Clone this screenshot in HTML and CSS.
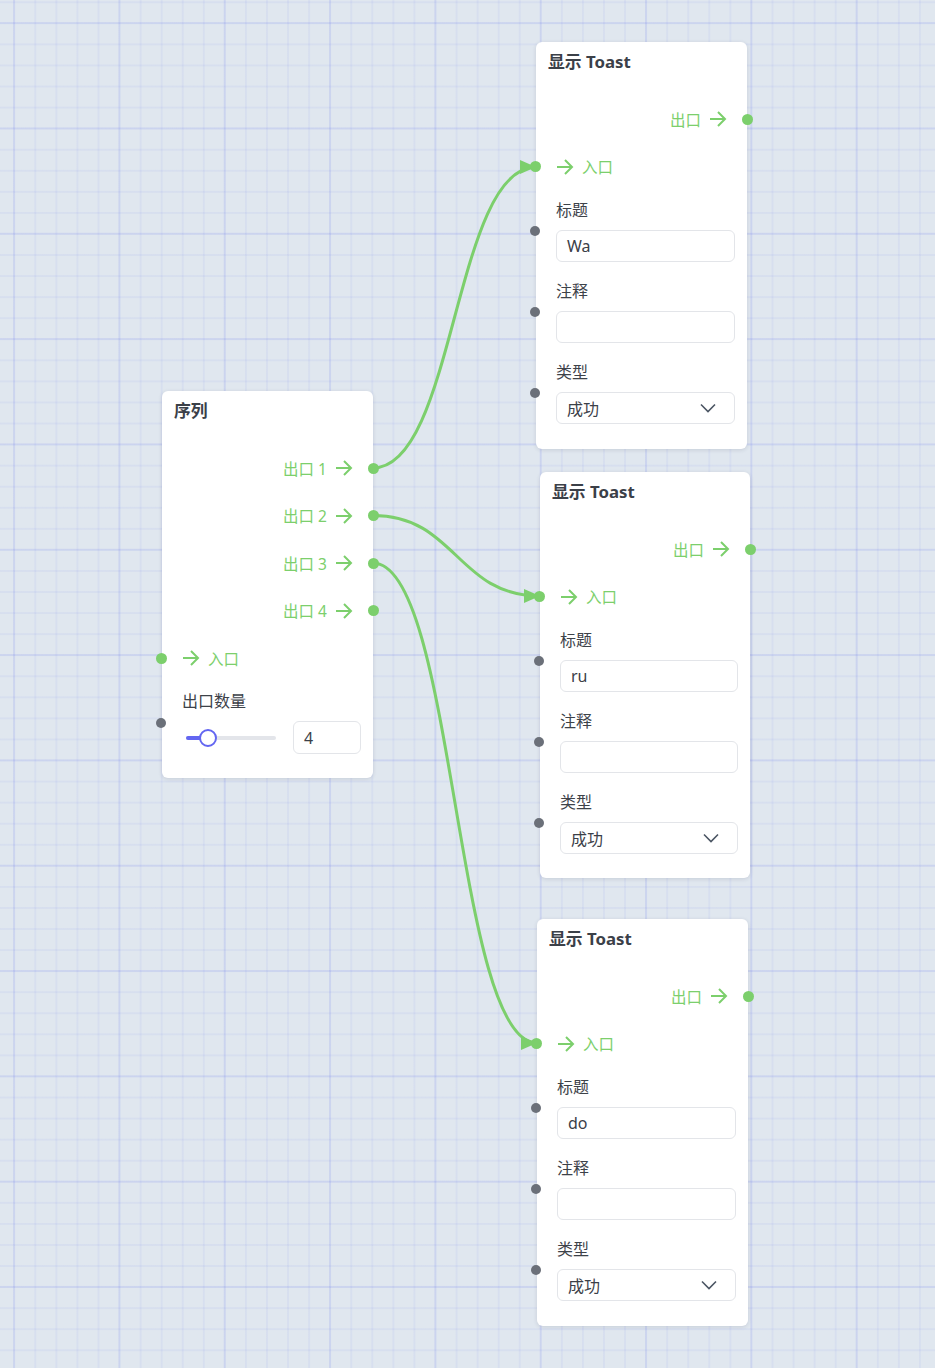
FILE: index.html
```html
<!DOCTYPE html>
<html lang="zh-CN">
<head>
    <meta charset="UTF-8">
    <meta name="viewport" content="width=device-width, initial-scale=1.0">
    <title>流程编辑器</title>
    <link rel="stylesheet" href="styles.css">
</head>
<body>
    <div class="canvas">
        <svg class="edges" width="935" height="1368" viewBox="0 0 935 1368">
            <defs>
                <marker id="head" markerUnits="userSpaceOnUse" markerWidth="18" markerHeight="16" refX="17" refY="8" orient="auto">
                    <path class="head" d="M1 1 L17 8 L1 15 Z"/>
                </marker>
            </defs>
            <path class="edge" d="M373 468 C455 468, 454 167, 536 167" marker-end="url(#head)"/>
            <path class="edge" d="M373 515.5 C456 515.5, 457 596, 540 596" marker-end="url(#head)"/>
            <path class="edge" d="M373 563 C455 563, 455 1043, 537 1043" marker-end="url(#head)"/>
        </svg>

        <!-- 序列节点 -->
        <div class="node node-seq">
            <div class="node-title">序列</div>
            <div class="ports">
                <div class="port out">出口 1 <svg class="arrow" viewBox="0 0 18 18"><path d="M1 9 H16 M9 2 L16 9 L9 16"/></svg></div>
                <div class="port out">出口 2 <svg class="arrow" viewBox="0 0 18 18"><path d="M1 9 H16 M9 2 L16 9 L9 16"/></svg></div>
                <div class="port out">出口 3 <svg class="arrow" viewBox="0 0 18 18"><path d="M1 9 H16 M9 2 L16 9 L9 16"/></svg></div>
                <div class="port out">出口 4 <svg class="arrow" viewBox="0 0 18 18"><path d="M1 9 H16 M9 2 L16 9 L9 16"/></svg></div>
                <div class="port in"><svg class="arrow" viewBox="0 0 18 18"><path d="M1 9 H16 M9 2 L16 9 L9 16"/></svg> 入口</div>
            </div>
            <div class="fields">
                <div class="field">
                    <label>出口数量</label>
                    <div class="slider-row">
                        <div class="slider">
                            <div class="slider-fill"></div>
                            <div class="slider-thumb"></div>
                        </div>
                        <div class="box num">4</div>
                    </div>
                </div>
            </div>
        </div>

        <!-- 显示 Toast 节点 -->
        <div class="node node-t1">
            <div class="node-title">显示 Toast</div>
            <div class="ports">
                <div class="port out">出口 <svg class="arrow" viewBox="0 0 18 18"><path d="M1 9 H16 M9 2 L16 9 L9 16"/></svg></div>
                <div class="port in"><svg class="arrow" viewBox="0 0 18 18"><path d="M1 9 H16 M9 2 L16 9 L9 16"/></svg> 入口</div>
            </div>
            <div class="fields">
                <div class="field"><label>标题</label><div class="box">Wa</div></div>
                <div class="field"><label>注释</label><div class="box"></div></div>
                <div class="field"><label>类型</label><div class="box select">成功 <svg class="chev" viewBox="0 0 16 10"><path d="M1 1.5 L8 8.5 L15 1.5"/></svg></div></div>
            </div>
        </div>

        <div class="node node-t2">
            <div class="node-title">显示 Toast</div>
            <div class="ports">
                <div class="port out">出口 <svg class="arrow" viewBox="0 0 18 18"><path d="M1 9 H16 M9 2 L16 9 L9 16"/></svg></div>
                <div class="port in"><svg class="arrow" viewBox="0 0 18 18"><path d="M1 9 H16 M9 2 L16 9 L9 16"/></svg> 入口</div>
            </div>
            <div class="fields">
                <div class="field"><label>标题</label><div class="box">ru</div></div>
                <div class="field"><label>注释</label><div class="box"></div></div>
                <div class="field"><label>类型</label><div class="box select">成功 <svg class="chev" viewBox="0 0 16 10"><path d="M1 1.5 L8 8.5 L15 1.5"/></svg></div></div>
            </div>
        </div>

        <div class="node node-t3">
            <div class="node-title">显示 Toast</div>
            <div class="ports">
                <div class="port out">出口 <svg class="arrow" viewBox="0 0 18 18"><path d="M1 9 H16 M9 2 L16 9 L9 16"/></svg></div>
                <div class="port in"><svg class="arrow" viewBox="0 0 18 18"><path d="M1 9 H16 M9 2 L16 9 L9 16"/></svg> 入口</div>
            </div>
            <div class="fields">
                <div class="field"><label>标题</label><div class="box">do</div></div>
                <div class="field"><label>注释</label><div class="box"></div></div>
                <div class="field"><label>类型</label><div class="box select">成功 <svg class="chev" viewBox="0 0 16 10"><path d="M1 1.5 L8 8.5 L15 1.5"/></svg></div></div>
            </div>
        </div>
    </div>
</body>
</html>
```

FILE: styles.css
```css
body {
    margin: 0;
    font-family: "Noto Sans", "Noto Sans CJK SC", sans-serif;
    overflow: hidden;
}

.canvas {
    position: relative;
    width: 935px;
    height: 1368px;
    background-color: #e0e7ef;
    background-image:
        linear-gradient(90deg, rgba(110, 125, 235, 0.11) 2px, transparent 2px),
        linear-gradient(0deg, rgba(110, 125, 235, 0.11) 2px, transparent 2px),
        linear-gradient(90deg, rgba(110, 125, 235, 0.08) 1.5px, transparent 1.5px),
        linear-gradient(0deg, rgba(110, 125, 235, 0.08) 1.5px, transparent 1.5px);
    background-size: 105.33px 105.33px, 105.33px 105.33px, 21.07px 21.07px, 21.07px 21.07px;
    background-position: 13px 24px, 13px 24px, 13.3px 24.3px, 13.3px 24.3px;
}

.edges {
    position: absolute;
    left: 0;
    top: 0;
    pointer-events: none;
}

.edges .edge {
    fill: none;
    stroke: #7ccf6c;
    stroke-width: 3;
}

.edges .head {
    fill: #7ccf6c;
    stroke: none;
}

.node {
    position: absolute;
    width: 211px;
    background: #fff;
    border-radius: 6px;
    box-shadow: 0 1px 4px rgba(40, 50, 80, 0.14);
    padding-bottom: 24px;
}

.node-seq { left: 162px; top: 391px; }
.node-t1 { left: 536px; top: 42px; padding-bottom: 25px; }
.node-t2 { left: 540px; top: 472px; width: 210px; padding-bottom: 24px; }
.node-t3 { left: 537px; top: 919px; padding-bottom: 25px; }

.node-title {
    padding: 10px 12px 0;
    line-height: 20px;
    font-size: 16.8px;
    font-weight: 700;
    color: #3b4048;
}

.ports {
    display: flex;
    flex-direction: column;
    gap: 23.5px;
    padding-top: 35px;
}

.port {
    position: relative;
    display: flex;
    align-items: center;
    gap: 8px;
    height: 24px;
    font-size: 15.5px;
    color: #7ccf6c;
}

.port.out {
    justify-content: flex-end;
    padding-right: 20px;
}

.port.in {
    padding-left: 20px;
}

.port::after {
    content: '';
    position: absolute;
    top: 6.5px;
    width: 11px;
    height: 11px;
    border-radius: 50%;
    background: #7ccf6c;
}

.port.out::after { right: -5.5px; }
.port.in::after { left: -6px; }

.arrow {
    width: 18px;
    height: 18px;
}

.arrow path {
    fill: none;
    stroke: #7ccf6c;
    stroke-width: 2;
}

.fields {
    display: flex;
    flex-direction: column;
    gap: 19px;
    padding: 21px 12px 0 20px;
}

.field {
    position: relative;
    display: flex;
    flex-direction: column;
    gap: 10px;
}

.field::before {
    content: '';
    position: absolute;
    left: -26px;
    top: 50%;
    margin-top: -5px;
    width: 10px;
    height: 10px;
    border-radius: 50%;
    background: #6b7079;
}

.field label {
    line-height: 20px;
    font-size: 16px;
    color: #3d4249;
}

.box {
    box-sizing: border-box;
    height: 32px;
    padding: 0 10px;
    display: flex;
    align-items: center;
    border: 1px solid #e3e5e9;
    border-radius: 6px;
    font-size: 16px;
    color: #3b4048;
}

.node-seq .box {
    height: 33px;
}

.select {
    justify-content: space-between;
    padding-right: 18px;
}

.chev {
    width: 16px;
    height: 10px;
}

.chev path {
    fill: none;
    stroke: #4b5563;
    stroke-width: 1.6;
}

.slider-row {
    display: flex;
    align-items: center;
    gap: 17px;
    padding-left: 4px;
}

.slider {
    position: relative;
    width: 90px;
    height: 4px;
    border-radius: 2px;
    background: #e3e5ea;
}

.slider-fill {
    width: 22px;
    height: 4px;
    border-radius: 2px;
    background: #6366f1;
}

.slider-thumb {
    position: absolute;
    left: 13px;
    top: -7px;
    box-sizing: border-box;
    width: 18px;
    height: 18px;
    border-radius: 50%;
    border: 2px solid #6366f1;
    background: #fff;
}

.num {
    width: 68px;
}
```
